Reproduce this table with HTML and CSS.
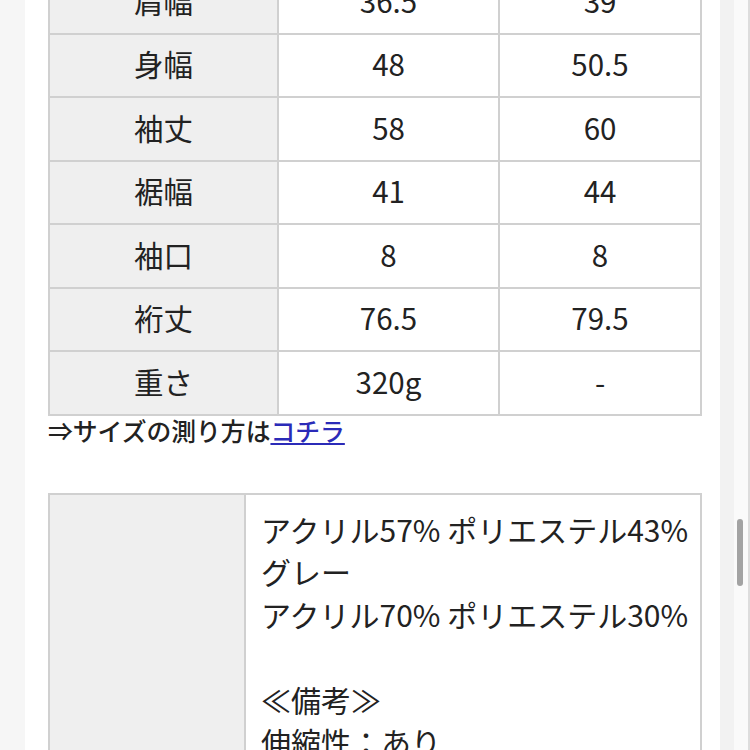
FILE: index.html
```html
<!DOCTYPE html>
<html lang="ja">
<head>
<meta charset="utf-8">
<link rel="stylesheet" href="styles.css">
</head>
<body>
<div class="page">
  <div class="gutter-left"></div>
  <main class="content">
    <table class="size-table">
      <tr><th>肩幅</th><td>36.5</td><td>39</td></tr>
      <tr><th>身幅</th><td>48</td><td>50.5</td></tr>
      <tr><th>袖丈</th><td>58</td><td>60</td></tr>
      <tr><th>裾幅</th><td>41</td><td>44</td></tr>
      <tr><th>袖口</th><td>8</td><td>8</td></tr>
      <tr><th>裄丈</th><td>76.5</td><td>79.5</td></tr>
      <tr><th>重さ</th><td>320g</td><td>-</td></tr>
    </table>
    <p class="caption">⇒サイズの測り方は<a href="#">コチラ</a></p>
    <table class="spec-table">
      <tr>
        <th></th>
        <td>アクリル57% ポリエステル43%<br>グレー<br>アクリル70% ポリエステル30%<br><br>≪備考≫<br>伸縮性：あり</td>
      </tr>
    </table>
  </main>
  <aside class="gutter-right">
    <div class="scroll-thumb"></div>
  </aside>
</div>
</body>
</html>
```
FILE: styles.css
```css
html, body {
  margin: 0;
  padding: 0;
  height: 100%;
  overflow: hidden;
}
body {
  background: #ffffff;
  font-family: "Noto Sans CJK JP", "Noto Sans", sans-serif;
  color: #222222;
}
.page {
  display: flex;
  height: 750px;
  overflow: hidden;
}
.gutter-left {
  width: 25px;
  flex: none;
  background: #f6f6f6;
}
.content {
  flex: 1;
  padding-left: 23px;
  padding-right: 18px;
  background: #ffffff;
}
.gutter-right {
  position: relative;
  width: 30px;
  flex: none;
  background: linear-gradient(to right, #f2f2f2 0, #f2f2f2 14px, #fafafa 14px, #fafafa 28px, #dddddd 28px);
}
.scroll-thumb {
  position: absolute;
  left: 17px;
  top: 519px;
  width: 6px;
  height: 67px;
  border-radius: 3px;
  background: #a3a3a3;
}
table {
  border-collapse: collapse;
  width: 654px;
}
.size-table {
  margin-top: -31px;
  table-layout: fixed;
}
.size-table th,
.size-table td {
  border: 2px solid #d0d0d0;
  height: 57.5px;
  padding: 0 0 4px;
  font-size: 29.5px;
  font-weight: normal;
  text-align: center;
  vertical-align: middle;
}
.size-table th {
  width: 227px;
  background: #efefef;
}
.size-table td:nth-child(2) {
  width: 219px;
}
.caption {
  margin: 0;
  font-size: 24.8px;
  font-weight: 500;
  line-height: 28px;
  color: #222222;
}
.caption a {
  color: #2b2bb8;
  text-decoration: underline;
}
.spec-table {
  margin-top: 49px;
  table-layout: fixed;
}
.spec-table th,
.spec-table td {
  border: 2px solid #d0d0d0;
  padding: 0;
  vertical-align: top;
}
.spec-table th {
  width: 194px;
  background: #efefef;
}
.spec-table td {
  padding: 13px 0 0 15px;
  font-size: 30px;
  line-height: 42.5px;
}
```
